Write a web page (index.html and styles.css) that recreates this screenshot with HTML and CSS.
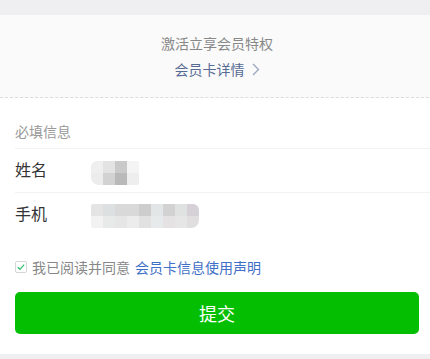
FILE: index.html
```html
<!DOCTYPE html>
<html lang="zh-CN">
<head>
<meta charset="utf-8">
<title>会员卡激活</title>
<link rel="stylesheet" href="styles.css">
</head>
<body>
<div class="page">
  <div class="topbar"></div>
  <div class="intro">
    <div class="intro-title">激活立享会员特权</div>
    <a class="intro-link" href="#">会员卡详情<svg class="chev" width="8" height="13" viewBox="0 0 8 13"><path d="M1 1l5.5 5.5L1 12" fill="none" stroke="#9ba6be" stroke-width="1.3"/></svg></a>
  </div>
  <div class="form">
    <div class="form-head">必填信息</div>
    <div class="row">
      <div class="label">姓名</div>
      <div class="mosaic mosaic-name">
        <span></span><span></span><span></span><span></span>
        <span></span><span></span><span></span><span></span>
      </div>
    </div>
    <div class="row">
      <div class="label">手机</div>
      <div class="mosaic mosaic-phone">
        <span></span><span></span><span></span><span></span><span></span><span></span><span></span><span></span><span></span>
        <span></span><span></span><span></span><span></span><span></span><span></span><span></span><span></span><span></span>
      </div>
    </div>
    <div class="agree">
      <span class="check"><svg width="10" height="10" viewBox="0 0 10 10"><path d="M1.8 5.2l2.2 2.1 4.2-4.6" fill="none" stroke="#2bbf6a" stroke-width="1.2"/></svg></span>
      <span class="agree-text">我已阅读并同意</span>
      <a class="agree-link" href="#">会员卡信息使用声明</a>
    </div>
    <button class="submit" type="button">提交</button>
  </div>
  <div class="bottombar"></div>
</div>
</body>
</html>
```

FILE: styles.css
```css
html, body {
  margin: 0;
  padding: 0;
  overflow: hidden;
  background: #ffffff;
}
.page {
  width: 434px;
  font-family: "Noto Sans CJK SC", "Noto Sans", sans-serif;
  color: #333;
}
.topbar {
  height: 15px;
  background: #efeff2;
}
.intro {
  background: #fafafa;
  padding: 15px 0;
  border-bottom: 1px dashed #dcdcdc;
  text-align: center;
  font-size: 14px;
  line-height: 26px;
}
.intro-title {
  color: #888888;
}
.intro-link {
  display: inline-flex;
  align-items: center;
  color: #576b95;
  text-decoration: none;
}
.chev {
  margin-left: 7px;
  margin-top: 1px;
}
.form {
  padding-bottom: 20px;
}
.form-head {
  padding: 23px 15px 7px;
  font-size: 14px;
  line-height: 20px;
  color: #999999;
}
.row {
  margin-left: 15px;
  border-top: 1px solid #f2f2f2;
  height: 43px;
  display: flex;
  align-items: center;
}
.label {
  width: 76px;
  font-size: 16px;
  color: #333;
  line-height: 20px;
  margin-top: -3px;
}
.mosaic {
  display: grid;
  grid-auto-rows: 12px;
  border-radius: 6px 2px 2px 8px;
  overflow: hidden;
  filter: blur(0.4px);
}
.mosaic span { display: block; }
.mosaic-name {
  grid-template-columns: repeat(4, 12px);
  margin-top: 4px;
}
.mosaic-name span:nth-child(1) { background: #efefef; }
.mosaic-name span:nth-child(2) { background: #e3e3e3; }
.mosaic-name span:nth-child(3) { background: #c9c9c9; }
.mosaic-name span:nth-child(4) { background: #f4f4f4; }
.mosaic-name span:nth-child(5) { background: #ececec; }
.mosaic-name span:nth-child(6) { background: #d2d2d2; }
.mosaic-name span:nth-child(7) { background: #b9b9b9; }
.mosaic-name span:nth-child(8) { background: #eeeeee; }
.mosaic-phone {
  grid-template-columns: repeat(9, 12px);
  margin-top: 3px;
  border-radius: 2px 6px 8px 2px;
}
.mosaic-phone span:nth-child(1) { background: #e4e4e4; }
.mosaic-phone span:nth-child(2) { background: #dde0e0; }
.mosaic-phone span:nth-child(3) { background: #d9d9d9; }
.mosaic-phone span:nth-child(4) { background: #d9d9d9; }
.mosaic-phone span:nth-child(5) { background: #cdcdcd; }
.mosaic-phone span:nth-child(6) { background: #e2e6e6; }
.mosaic-phone span:nth-child(7) { background: #d3d2d2; }
.mosaic-phone span:nth-child(8) { background: #e0e2e2; }
.mosaic-phone span:nth-child(9) { background: #d5d1d7; }
.mosaic-phone span:nth-child(10) { background: #f2f2f2; }
.mosaic-phone span:nth-child(11) { background: #e8eaea; }
.mosaic-phone span:nth-child(12) { background: #e6e6e6; }
.mosaic-phone span:nth-child(13) { background: #ececec; }
.mosaic-phone span:nth-child(14) { background: #e1e1e1; }
.mosaic-phone span:nth-child(15) { background: #e7eaea; }
.mosaic-phone span:nth-child(16) { background: #e4e2e2; }
.mosaic-phone span:nth-child(17) { background: #e6e6e6; }
.mosaic-phone span:nth-child(18) { background: #e0dede; }
.agree {
  margin: 21px 15px 0;
  display: flex;
  align-items: center;
  font-size: 14px;
  line-height: 20px;
}
.check {
  width: 10px;
  height: 10px;
  border: 1px solid #d6d6d6;
  border-radius: 2px;
  display: flex;
  align-items: center;
  justify-content: center;
  margin-right: 5px;
  background: #fff;
}
.check svg { display: block; }
.agree-text {
  color: #888888;
  margin-right: 5px;
}
.agree-link {
  color: #3f6fc6;
  text-decoration: none;
}
.submit {
  display: block;
  width: 404px;
  height: 42px;
  margin: 15px 0 0 15px;
  border: 0;
  border-radius: 5px;
  background: #04be02;
  color: #ffffff;
  font-family: "Noto Sans CJK SC", "Noto Sans", sans-serif;
  font-size: 18px;
  padding: 0;
}
.bottombar {
  height: 6px;
  background: #efeff2;
}
```
